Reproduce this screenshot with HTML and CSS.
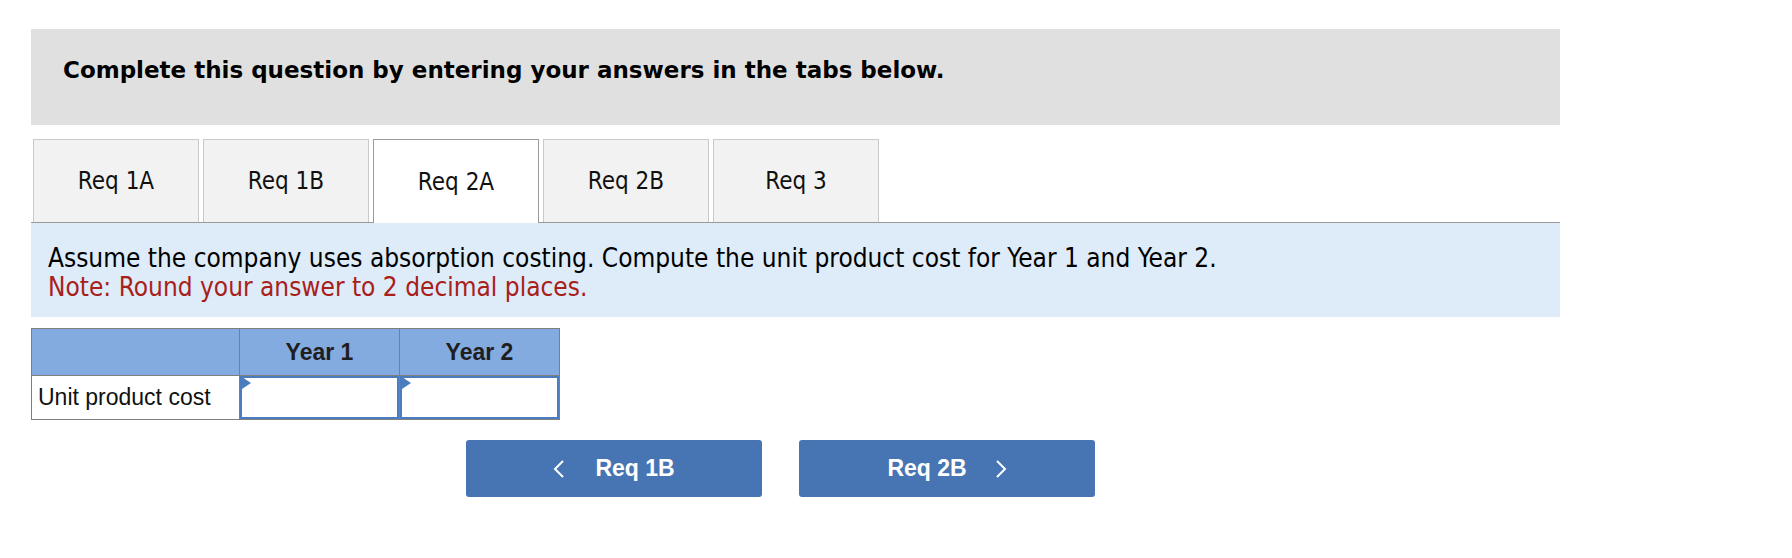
FILE: index.html
```html
<!DOCTYPE html>
<html>
<head>
<meta charset="utf-8">
<link rel="stylesheet" href="styles.css">
</head>
<body>
<div class="wrap">
  <div class="banner">Complete this question by entering your answers in the tabs below.</div>
  <div class="tabs">
    <div class="tab">Req 1A</div>
    <div class="tab">Req 1B</div>
    <div class="tab active">Req 2A</div>
    <div class="tab">Req 2B</div>
    <div class="tab">Req 3</div>
  </div>
  <div class="info">
    <div class="line">Assume the company uses absorption costing. Compute the unit product cost for Year 1 and Year 2.</div>
    <div class="line note">Note: Round your answer to 2 decimal places.</div>
  </div>
  <table class="grid">
    <tr class="head">
      <th class="label-col"></th>
      <th>Year 1</th>
      <th>Year 2</th>
    </tr>
    <tr class="row">
      <td class="label">Unit product cost</td>
      <td class="cell"><div class="input"><span class="flag"></span></div></td>
      <td class="cell"><div class="input"><span class="flag"></span></div></td>
    </tr>
  </table>
  <div class="nav">
    <div class="btn prev">
      <svg class="chev" width="12" height="20" viewBox="0 0 12 20"><polyline points="10,2 2,10 10,18" fill="none" stroke="#fff" stroke-width="2"/></svg>
      <span>Req 1B</span>
    </div>
    <div class="btn next">
      <span>Req 2B</span>
      <svg class="chev" width="12" height="20" viewBox="0 0 12 20"><polyline points="2,2 10,10 2,18" fill="none" stroke="#fff" stroke-width="2"/></svg>
    </div>
  </div>
</div>
</body>
</html>
```
FILE: styles.css
```css
html, body {
  margin: 0;
  padding: 0;
  background: #ffffff;
}
.wrap {
  padding: 29px 0 0 31px;
  width: 1529px;
}
.banner {
  height: 96px;
  box-sizing: border-box;
  background: #e0e0e0;
  padding: 26px 0 0 32px;
  font-family: "DejaVu Sans", Verdana, sans-serif;
  font-weight: bold;
  font-size: 23px;
  line-height: 30px;
  color: #000;
}
.tabs {
  margin-top: 14px;
  display: flex;
  gap: 4px;
  padding-left: 2px;
  border-bottom: 1px solid #9a9a9a;
}
.tab {
  width: 166px;
  height: 83px;
  box-sizing: border-box;
  background: #f2f2f2;
  border: 1px solid #c9c9c9;
  border-bottom: none;
  display: flex;
  align-items: center;
  justify-content: center;
  font-family: "DejaVu Sans Condensed", "DejaVu Sans", sans-serif;
  font-size: 24px;
  color: #111;
}
.tab.active {
  background: #ffffff;
  border-color: #9a9a9a;
  height: 84px;
  margin-bottom: -1px;
}
.info {
  background: #deebf8;
  padding: 21px 0 15px 17px;
  height: 94px;
  box-sizing: border-box;
  font-family: "DejaVu Sans Condensed", "DejaVu Sans", sans-serif;
  font-size: 26px;
  line-height: 29px;
  color: #000;
}
.note {
  color: #a8201a;
}
.grid {
  margin-top: 11px;
  border-collapse: collapse;
  font-family: "Liberation Sans", Arial, sans-serif;
}
.grid th, .grid td {
  border: 1px solid #7f7f7f;
  padding: 0;
}
.head th {
  background: #84abe0;
  height: 46px;
  width: 159px;
  font-size: 23px;
  font-weight: bold;
  color: #1e1e1e;
  text-align: center;
}
.head th.label-col {
  width: 207px;
}
.row td {
  height: 43px;
}
.label {
  font-size: 23px;
  color: #111;
  padding-left: 6px !important;
  text-align: left;
}
.cell {
  position: relative;
}
.input {
  position: relative;
  height: 39px;
  border: 2px solid #4a7cc0;
  background: #fff;
}
.flag {
  position: absolute;
  left: 0;
  top: 0;
  width: 0;
  height: 0;
  border-top: 6px solid transparent;
  border-bottom: 6px solid transparent;
  border-left: 9px solid #4a7cc0;
  margin-top: -1px;
}
.nav {
  margin: 20px 0 0 435px;
  display: flex;
  gap: 37px;
}
.btn {
  width: 296px;
  height: 57px;
  background: #4775b4;
  border-radius: 3px;
  display: flex;
  align-items: center;
  justify-content: center;
  gap: 30px;
  color: #fff;
  font-family: "Liberation Sans", Arial, sans-serif;
  font-weight: bold;
  font-size: 23px;
}
.btn.next {
  gap: 28px;
}
.chev {
  display: block;
}
```
